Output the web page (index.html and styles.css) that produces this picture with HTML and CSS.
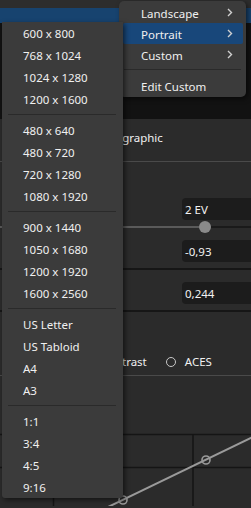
FILE: index.html
```html
<!DOCTYPE html>
<html>
<head>
<meta charset="utf-8">
<link rel="stylesheet" href="styles.css">
</head>
<body>
<div class="app">
  <div class="topbar"></div>
  <div class="selrow"></div>
  <div class="darkzone"></div>
  <div class="sec tone"><span class="tone-label">Photographic</span></div>
  <div class="sec params">
    <div class="field f-first">2 EV</div>
    <div class="slider">
      <div class="track-l"></div>
      <div class="thumb"></div>
      <div class="track-r"></div>
    </div>
    <div class="field f-second">-0,93</div>
    <div class="divider d-first"></div>
    <div class="field f-third">0,244</div>
    <div class="divider d-second"></div>
  </div>
  <div class="sec radios">
    <div class="radio r-contrast"><span class="ring"></span><span>High Contrast</span></div>
    <div class="radio r-aces"><span class="ring"></span><span>ACES</span></div>
  </div>
  <div class="graph">
    <svg class="graph-svg" width="251" height="130" viewBox="0 0 251 130">
      <line x1="0" y1="58.5" x2="251" y2="58.5" stroke="#151515" stroke-width="1.5"/>
      <line x1="0" y1="91.5" x2="251" y2="91.5" stroke="#151515" stroke-width="1.5"/>
      <line x1="53.5" y1="58" x2="53.5" y2="130" stroke="#151515" stroke-width="1.5"/>
      <line x1="193" y1="58" x2="193" y2="130" stroke="#151515" stroke-width="1.5"/>
      <line x1="108" y1="131" x2="253" y2="61" stroke="#9a9a9a" stroke-width="2"/>
      <circle cx="206" cy="84" r="4" fill="none" stroke="#9a9a9a" stroke-width="1.6"/>
      <circle cx="123" cy="124" r="4" fill="none" stroke="#9a9a9a" stroke-width="1.6"/>
    </svg>
  </div>
</div>

<div class="menu main-menu">
  <div class="item"><span>Landscape</span><svg class="chev" width="6" height="9" viewBox="0 0 6 9"><polyline points="1,1 4.5,4.5 1,8" fill="none" stroke="#d0d0d0" stroke-width="1.4"/></svg></div>
  <div class="item active"><span>Portrait</span><svg class="chev" width="6" height="9" viewBox="0 0 6 9"><polyline points="1,1 4.5,4.5 1,8" fill="none" stroke="#d0d0d0" stroke-width="1.4"/></svg></div>
  <div class="item"><span>Custom</span><svg class="chev" width="6" height="9" viewBox="0 0 6 9"><polyline points="1,1 4.5,4.5 1,8" fill="none" stroke="#d0d0d0" stroke-width="1.4"/></svg></div>
  <div class="sep"></div>
  <div class="item"><span>Edit Custom</span></div>
</div>

<div class="menu sub-menu">
  <div class="sitem">600 x 800</div>
  <div class="sitem">768 x 1024</div>
  <div class="sitem">1024 x 1280</div>
  <div class="sitem">1200 x 1600</div>
  <div class="ssep"></div>
  <div class="sitem">480 x 640</div>
  <div class="sitem">480 x 720</div>
  <div class="sitem">720 x 1280</div>
  <div class="sitem">1080 x 1920</div>
  <div class="ssep"></div>
  <div class="sitem">900 x 1440</div>
  <div class="sitem">1050 x 1680</div>
  <div class="sitem">1200 x 1920</div>
  <div class="sitem">1600 x 2560</div>
  <div class="ssep"></div>
  <div class="sitem">US Letter</div>
  <div class="sitem">US Tabloid</div>
  <div class="sitem">A4</div>
  <div class="sitem">A3</div>
  <div class="ssep"></div>
  <div class="sitem">1:1</div>
  <div class="sitem">3:4</div>
  <div class="sitem">4:5</div>
  <div class="sitem">9:16</div>
</div>
</body>
</html>
```
FILE: styles.css
```css
html, body {
  margin: 0;
  padding: 0;
}
body {
  width: 251px;
  height: 508px;
  overflow: hidden;
  position: relative;
  background: #2b2b2b;
  font-family: "Noto Sans", "Open Sans", sans-serif;
  font-size: 11.5px;
  color: #f0f0f0;
}
.app {
  display: flex;
  flex-direction: column;
  width: 251px;
  height: 508px;
}
.topbar {
  height: 8px;
  background: #2d2d2d;
}
.selrow {
  height: 15px;
  background: #17436f;
}
.darkzone {
  height: 96px;
  background: #121212;
}
.sec {
  background: #2b2b2b;
}
.tone {
  height: 43px;
  box-sizing: border-box;
  padding: 10px 0 0 90px;
  line-height: 18px;
  border-bottom: 1px solid #4a4a4a;
}
.params {
  padding-top: 36px;
  display: flex;
  flex-direction: column;
}
.field {
  margin-left: 182px;
  height: 22px;
  box-sizing: border-box;
  padding: 1px 0 0 3px;
  line-height: 21px;
  background: #1c1c1c;
  border-radius: 4px 0 0 4px;
  color: #f2f2f2;
}
.slider {
  height: 14px;
  display: flex;
  align-items: center;
}
.track-l {
  width: 199px;
  height: 2px;
  background: #5a5a5a;
}
.thumb {
  width: 12px;
  height: 12px;
  border-radius: 50%;
  background: #8a8a8a;
}
.track-r {
  flex: 1;
  height: 2px;
  background: #1a1a1a;
}
.f-second {
  margin-top: 6px;
}
.divider {
  height: 2px;
  background: #161616;
}
.d-first {
  margin-top: 6px;
}
.f-third {
  margin-top: 12px;
}
.d-second {
  margin-top: 6px;
}
.radios {
  height: 64px;
  box-sizing: border-box;
  padding: 37px 0 0 72px;
  display: flex;
  gap: 19px;
  line-height: 18px;
  border-bottom: 1px solid #4a4a4a;
}
.radio {
  display: flex;
  align-items: center;
  gap: 9px;
}
.r-contrast .ring {
  display: none;
}
.ring {
  width: 8px;
  height: 8px;
  margin-top: -1px;
  border: 1.5px solid #c8c8c8;
  border-radius: 50%;
}
.graph {
  flex: 1;
  position: relative;
}
.graph-svg {
  display: block;
  position: absolute;
  left: 0;
  top: 0;
}
.menu {
  position: absolute;
  background: #3b3b3b;
  box-shadow: 2px 2px 5px rgba(0, 0, 0, 0.55);
}
.main-menu {
  left: 119px;
  top: 1px;
  width: 127px;
  box-sizing: border-box;
  padding: 1px 3px 1px 4px;
  border-radius: 5px;
}
.item {
  height: 21px;
  box-sizing: border-box;
  padding: 1px 10px 0 18px;
  display: flex;
  align-items: center;
  justify-content: space-between;
  border-radius: 2px;
}
.item.active {
  background: #18477a;
}
.chev {
  display: block;
  margin-top: -1px;
}
.sep {
  height: 1px;
  background: #2a2a2a;
  margin: 4px 2px 5px 1px;
}
.sub-menu {
  left: 2px;
  top: 22px;
  width: 121px;
  border-radius: 0 0 3px 3px;
}
.sitem {
  height: 22px;
  box-sizing: border-box;
  padding: 1px 0 0 21px;
  line-height: 21px;
}
.ssep {
  height: 1px;
  background: #2a2a2a;
  margin: 4px 7px 4px 6px;
}
```
